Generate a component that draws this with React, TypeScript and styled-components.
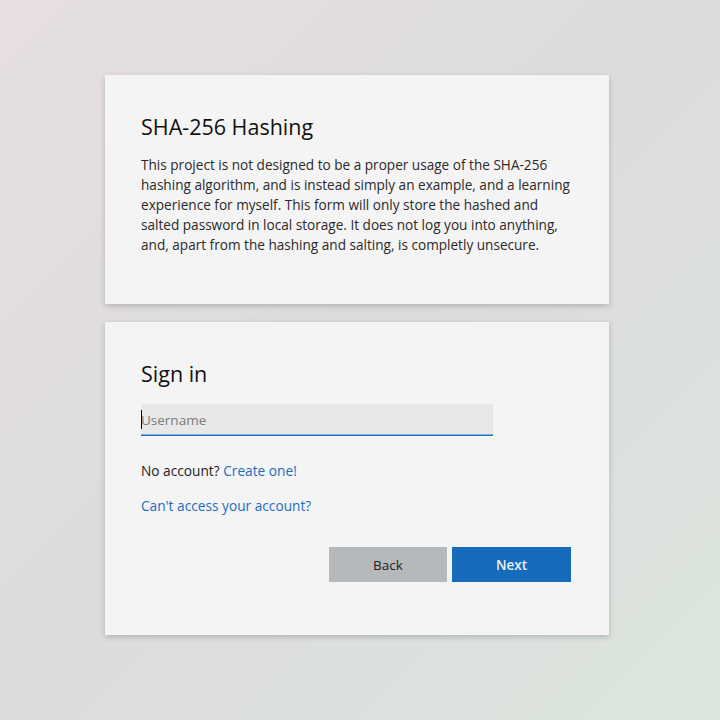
import React from "react";
import styled, { createGlobalStyle } from "styled-components";

const Global = createGlobalStyle`
  html, body { margin: 0; padding: 0; }
  body {
    width: 720px;
    height: 720px;
    background: linear-gradient(135deg, #e7dfe0 0%, #dcdcdd 50%, #dce6de 100%);
    font-family: "Open Sans", "Noto Sans", sans-serif;
    color: #1b1b1b;
  }
`;

const Page = styled.main`
  display: flex;
  flex-direction: column;
  align-items: center;
  gap: 18px;
  padding: 75px 6px 0 0;
  box-sizing: border-box;
  height: 720px;
`;

const Card = styled.section<{ $h: number }>`
  width: 504px;
  height: ${(p) => p.$h}px;
  box-sizing: border-box;
  background: #f4f4f4;
  box-shadow: 0 2px 6px rgba(0, 0, 0, 0.2);
  padding: 36px 36px 0 36px;
  display: flex;
  flex-direction: column;
`;

const Title = styled.h1`
  margin: 2px 0 0 0;
  font-size: 21.5px;
  line-height: 28px;
  font-weight: 500;
  color: #111;
`;

const Body = styled.p`
  margin: 14px 0 0 0;
  font-size: 13.6px;
  line-height: 20px;
  color: #2a2a2a;
`;

const Input = styled.input`
  appearance: none;
  margin-top: 16px;
  width: 352px;
  height: 32px;
  box-sizing: border-box;
  border: 0;
  border-radius: 0;
  box-shadow: inset 0 -1.5px 0 #1f72c4;
  background: linear-gradient(#000, #000) no-repeat 0 6px / 1px 19px, #e8e8e8;
  padding: 0;
  font-family: inherit;
  font-size: 13.5px;
  color: #222;
  outline: none;
  &::placeholder { color: #7a7a7a; }
`;

const Line = styled.p<{ $top: number }>`
  margin: ${(p) => p.$top}px 0 0 0;
  font-size: 13.7px;
  line-height: 20px;
  color: #222;
`;

const Link = styled.a`
  color: #1a6ebf;
  text-decoration: none;
`;

const Actions = styled.div`
  margin-top: 31px;
  display: flex;
  justify-content: flex-end;
  gap: 5px;
  padding-right: 2px;
`;

const Button = styled.button<{ $primary?: boolean }>`
  width: ${(p) => (p.$primary ? 119 : 118)}px;
  height: 35px;
  border: none;
  font-family: inherit;
  font-size: 13.5px;
  font-weight: ${(p) => (p.$primary ? 600 : 400)};
  background: ${(p) => (p.$primary ? "#176bbd" : "#b6b9bc")};
  color: ${(p) => (p.$primary ? "#e9f2fb" : "#222")};
`;

export default function App() {
  return (
    <>
      <Global />
      <Page>
        <Card $h={229}>
          <Title>SHA-256 Hashing</Title>
          <Body>
            This project is not designed to be a proper usage of the SHA-256 hashing algorithm, and is
            instead simply an example, and a learning experience for myself. This form will only store the
            hashed and salted password in local storage. It does not log you into anything, and, apart
            from the hashing and salting, is completly unsecure.
          </Body>
        </Card>
        <Card $h={313}>
          <Title>Sign in</Title>
          <Input placeholder="Username" />
          <Line $top={25}>
            No account? <Link href="#">Create one!</Link>
          </Line>
          <Line $top={15}>
            <Link href="#">Can't access your account?</Link>
          </Line>
          <Actions>
            <Button>Back</Button>
            <Button $primary>Next</Button>
          </Actions>
        </Card>
      </Page>
    </>
  );
}
